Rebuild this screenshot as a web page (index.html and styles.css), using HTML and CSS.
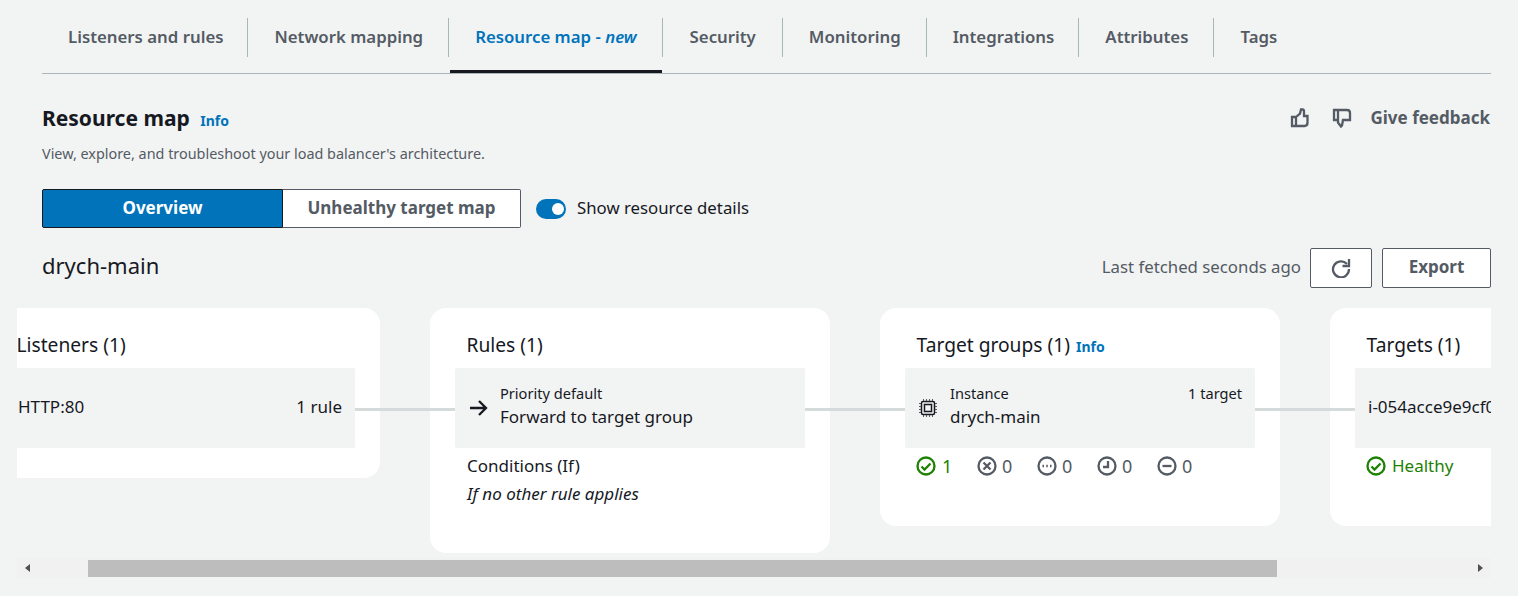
FILE: index.html
```html
<!DOCTYPE html>
<html lang="en">
<head>
    <meta charset="UTF-8">
    <title>Resource map</title>
    <link rel="stylesheet" href="styles.css">
</head>
<body>
    <nav class="tabs">
        <a class="tab">Listeners and rules</a>
        <a class="tab">Network mapping</a>
        <a class="tab active">Resource map - <em>new</em></a>
        <a class="tab">Security</a>
        <a class="tab">Monitoring</a>
        <a class="tab">Integrations</a>
        <a class="tab">Attributes</a>
        <a class="tab">Tags</a>
    </nav>

    <div class="header">
        <h2>Resource map <a class="info">Info</a></h2>
        <div class="feedback">
            <svg class="icon thumb-up" viewBox="0 0 20 20"><path d="M6 9v9H2V9h4zM6 9l4-3.5 1-4h1.5q1.5 0 1.5 2V8h3.5v6.5q0 3.5-3 3.5H6"/></svg>
            <svg class="icon thumb-down" viewBox="0 0 20 20"><path d="M2 2h13q3 0 3 3v7h-7l-1 5.5-1 1-3-4V12H2V2zM6 2v10"/></svg>
            <strong>Give feedback</strong>
        </div>
    </div>
    <p class="desc">View, explore, and troubleshoot your load balancer's architecture.</p>

    <div class="controls">
        <div class="segments">
            <button class="segment on">Overview</button>
            <button class="segment">Unhealthy target map</button>
        </div>
        <span class="toggle"></span>
        <span class="toggle-label">Show resource details</span>
    </div>

    <div class="name-row">
        <h3>drych-main</h3>
        <div class="actions">
            <span class="fetched">Last fetched seconds ago</span>
            <button class="btn refresh">
                <svg class="icon" viewBox="0 0 20 20"><path d="M16 6A8 8 0 1 0 18 11"/><path d="M18 1v7h-6.5"/></svg>
            </button>
            <button class="btn export">Export</button>
        </div>
    </div>

    <div class="canvas">
        <div class="track">
            <section class="card listeners">
                <h4>Listeners (1)</h4>
                <div class="item linked">
                    <span class="big">HTTP:80</span>
                    <span class="big">1 rule</span>
                </div>
            </section>
            <section class="card rules">
                <h4>Rules (1)</h4>
                <div class="item linked">
                    <svg class="icon arrow" viewBox="0 0 20 20"><path d="M2 10h16M11 3l7 7-7 7"/></svg>
                    <div class="stack">
                        <span class="small">Priority default</span>
                        <span class="big">Forward to target group</span>
                    </div>
                </div>
                <p class="cond">Conditions (If)</p>
                <p class="cond"><em>If no other rule applies</em></p>
            </section>
            <section class="card groups">
                <h4>Target groups (1) <a class="info">Info</a></h4>
                <div class="item linked">
                    <svg class="icon chip" viewBox="0 0 20 20">
                        <rect x="3.5" y="3.5" width="13" height="13" rx="1.5"/>
                        <rect x="6.5" y="6.5" width="7" height="7"/>
                        <path class="pins" d="M1 5.5h2M1 8.5h2M1 11.5h2M1 14.5h2M17 5.5h2M17 8.5h2M17 11.5h2M17 14.5h2M5.5 1v2M8.5 1v2M11.5 1v2M14.5 1v2M5.5 17v2M8.5 17v2M11.5 17v2M14.5 17v2"/>
                    </svg>
                    <div class="stack">
                        <span class="small">Instance</span>
                        <span class="big">drych-main</span>
                    </div>
                    <span class="small count">1 target</span>
                </div>
                <div class="statuses">
                    <span class="status ok"><svg class="icon" viewBox="0 0 20 20"><circle cx="10" cy="10" r="8.5"/><path d="M5.5 10.5l3 3 6-6"/></svg>1</span>
                    <span class="status"><svg class="icon" viewBox="0 0 20 20"><circle cx="10" cy="10" r="8.5"/><path d="M6.5 6.5l7 7M13.5 6.5l-7 7"/></svg>0</span>
                    <span class="status"><svg class="icon" viewBox="0 0 20 20"><circle cx="10" cy="10" r="8.5"/><path d="M5.5 10h1.5M9.25 10h1.5M13 10h1.5"/></svg>0</span>
                    <span class="status"><svg class="icon" viewBox="0 0 20 20"><circle cx="10" cy="10" r="8.5"/><path d="M11 5v6H6"/></svg>0</span>
                    <span class="status"><svg class="icon" viewBox="0 0 20 20"><circle cx="10" cy="10" r="8.5"/><path d="M5.5 10h9"/></svg>0</span>
                </div>
            </section>
            <section class="card targets">
                <h4>Targets (1)</h4>
                <div class="item">
                    <span class="big">i-054acce9e9cf0a1b2</span>
                </div>
                <div class="healthy"><svg class="icon" viewBox="0 0 20 20"><circle cx="10" cy="10" r="8.5"/><path d="M5.5 10.5l3 3 6-6"/></svg>Healthy</div>
            </section>
        </div>
    </div>

    <div class="scrollbar">
        <span class="arrow-left"></span>
        <div class="thumb"></div>
        <span class="arrow-right"></span>
    </div>
</body>
</html>
```

FILE: styles.css
```css
* { box-sizing: border-box; }
body { margin: 0; height: 596px; overflow: hidden; padding: 0 27px 0 42px; font-family: "Noto Sans", Arial, sans-serif; font-size: 17px; color: #16191f; background-color: #f2f3f3; }
h2, h3, h4, p { margin: 0; font-weight: 400; }
button { font-family: inherit; cursor: pointer; }

.icon { display: block; width: 20px; height: 20px; flex: none; fill: none; stroke: currentColor; stroke-width: 2.3; }

.tabs { display: flex; height: 74px; padding-top: 18px; border-bottom: 1px solid #aab7b8; }
.tab { position: relative; height: 39px; padding: 0 25px 0 26px; line-height: 38px; font-size: 16.8px; font-weight: 600; color: #545b64; white-space: nowrap; border-right: 1px solid #aab7b8; }
.tab:first-child { padding-right: 24px; }
.tab:nth-child(4) { padding: 0 26px 0 27px; }
.tab:nth-child(6) { padding-right: 24px; }
.tab:last-child { border-right: none; }
.tab.active { color: #0073bb; }
.tab.active::after { content: ""; position: absolute; left: 1px; right: 0; top: 52px; height: 3px; background-color: #16191f; }

.header { display: flex; justify-content: space-between; align-items: center; height: 30px; margin-top: 29px; }
.header h2 { font-size: 21px; font-weight: 700; }
.info { margin-left: 5px; font-size: 14px; font-weight: 700; color: #0073bb; }
.feedback { display: flex; align-items: center; color: #545b64; }
.feedback strong { padding: 0 1px 2px 0; font-weight: 700; }
.thumb-up { margin-right: 22px; }
.thumb-down { margin-right: 18px; }
.desc { margin-top: 11px; font-size: 14.4px; line-height: 20px; color: #545b64; }

.controls { display: flex; align-items: center; margin-top: 25px; }
.segments { display: flex; width: 479px; height: 39px; }
.segment { height: 39px; padding: 0 0 2px; font-size: 17px; font-weight: 700; color: #545b64; background-color: #fff; border: 1px solid #545b64; border-left: none; border-radius: 0 2px 2px 0; flex: 1; }
.segment.on { flex: none; width: 241px; color: #fff; background-color: #0073bb; border: 1px solid #16191f; border-radius: 2px 0 0 2px; }
.toggle { position: relative; width: 30px; height: 20px; margin-left: 15px; background-color: #0073bb; border-radius: 10px; }
.toggle::after { content: ""; position: absolute; right: 2px; top: 4px; width: 12px; height: 12px; background-color: #fff; border-radius: 50%; }
.toggle-label { margin-left: 11px; padding-bottom: 2px; font-size: 16.8px; color: #16191f; }

.name-row { display: flex; justify-content: space-between; align-items: center; height: 40px; margin-top: 20px; }
.name-row h3 { padding-bottom: 6px; font-size: 22px; }
.actions { display: flex; align-items: center; }
.fetched { margin-right: 9px; padding-bottom: 4px; font-size: 16.8px; color: #545b64; }
.btn { height: 40px; padding: 0 0 3px; font-size: 17px; font-weight: 700; color: #545b64; background-color: #fff; border: 1px solid #545b64; border-radius: 2px; }
.refresh { display: flex; align-items: center; justify-content: center; width: 62px; margin-right: 10px; padding: 0; }
.export { width: 109px; }

.canvas { width: 1474px; height: 250px; margin: 20px 0 0 -25px; overflow: hidden; }
.track { display: flex; align-items: flex-start; gap: 50px; width: 2000px; margin-left: -37px; }
.card { flex: none; width: 400px; padding: 25px 25px 0; background-color: #fff; border-radius: 16px; }
.listeners { height: 170px; }
.rules { height: 245px; }
.groups, .targets { height: 218px; }
.card h4 { height: 35px; padding-left: 11.5px; font-size: 19.2px; line-height: 24px; }
.card h4 .info { margin-left: 1px; }

.item { position: relative; display: flex; align-items: center; justify-content: space-between; height: 80px; padding: 0 13px; background-color: #f2f3f3; border-radius: 2px; }
.linked::after { content: ""; position: absolute; left: 100%; top: 40px; width: 100px; height: 3px; background-color: #d5dbdb; }
.big { padding-bottom: 2px; font-size: 17px; line-height: 22px; white-space: nowrap; }
.small { font-size: 14.6px; line-height: 20px; }
.stack { display: flex; flex: 1; flex-direction: column; margin: 0 0 6px 12px; }
.stack .small { margin-bottom: 3px; }
.stack .big { padding-bottom: 0; }
.count { align-self: flex-start; margin-top: 15px; }
.chip { stroke-width: 1.5; }
.chip .pins { stroke: #545b64; stroke-width: 1; }
.rules .item { margin-bottom: 7px; }
.cond { padding-left: 12px; margin-bottom: 6px; line-height: 22px; }

.statuses { display: flex; margin-top: 7px; padding-left: 11px; font-size: 18px; color: #545b64; }
.status { display: flex; flex: none; align-items: center; gap: 5px; width: 60px; line-height: 22px; }
.status.ok { width: 61px; gap: 6px; color: #1d8102; }
.healthy { display: flex; align-items: center; gap: 6px; margin-top: 7px; padding-left: 11px; color: #1d8102; line-height: 22px; }

.scrollbar { display: flex; align-items: center; width: 1474px; height: 20px; margin-left: -25px; background-color: #f1f1f1; }
.thumb { width: 1189px; height: 17px; margin-left: 58px; background-color: #bdbdbd; }
.arrow-left { width: 0; height: 0; margin-left: 8px; border: 4px solid transparent; border-left: none; border-right: 5px solid #505050; }
.arrow-right { width: 0; height: 0; margin-left: 201px; border: 4px solid transparent; border-right: none; border-left: 5px solid #505050; }
```
